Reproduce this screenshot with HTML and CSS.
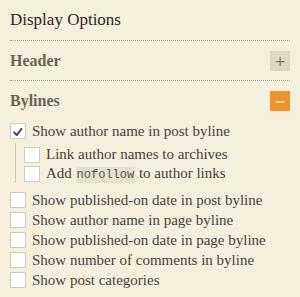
FILE: index.html
```html
<!DOCTYPE html>
<html>
<head>
<meta charset="utf-8">
<link rel="stylesheet" href="styles.css">
</head>
<body>
<div class="panel">
  <div class="title">Display Options</div>
  <div class="section">
    <span class="section-name">Header</span>
    <span class="toggle">+</span>
  </div>
  <div class="section open">
    <span class="section-name">Bylines</span>
    <span class="toggle active">&minus;</span>
  </div>
  <ul class="options">
    <li class="opt"><span class="cb checked"><svg viewBox="0 0 16 16" width="16" height="16"><path d="M3.5 8.5 L6.5 11.5 L12 4.5" fill="none" stroke="#4b3b6b" stroke-width="2.2" stroke-linecap="round" stroke-linejoin="round"/></svg></span><span>Show author name in post byline</span></li>
    <li class="sub">
      <ul class="suboptions">
        <li class="opt subopt"><span class="cb"></span><span>Link author names to archives</span></li>
        <li class="opt subopt"><span class="cb"></span><span>Add <code>nofollow</code> to author links</span></li>
      </ul>
    </li>
    <li class="opt"><span class="cb"></span><span>Show published-on date in post byline</span></li>
    <li class="opt"><span class="cb"></span><span>Show author name in page byline</span></li>
    <li class="opt"><span class="cb"></span><span>Show published-on date in page byline</span></li>
    <li class="opt"><span class="cb"></span><span>Show number of comments in byline</span></li>
    <li class="opt"><span class="cb"></span><span>Show post categories</span></li>
  </ul>
</div>
</body>
</html>
```

FILE: styles.css
```css
html, body {
  margin: 0;
  padding: 0;
  background: #f5f0de;
}
body {
  font-family: "Liberation Serif", "Times New Roman", serif;
  color: #4d4a44;
}
.panel {
  padding: 0 10px;
}
.title {
  height: 40px;
  line-height: 40px;
  font-size: 17px;
  color: #2a2826;
  border-bottom: 1px dotted #aba38c;
}
.section {
  height: 39px;
  display: flex;
  align-items: center;
  justify-content: space-between;
  border-bottom: 1px dotted #aba38c;
}
.section.open {
  border-bottom: none;
}
.section-name {
  font-size: 16px;
  font-weight: bold;
  color: #6a6454;
}
.toggle {
  width: 20px;
  height: 20px;
  background: #dcd8c3;
  color: #7b7668;
  font-family: "DejaVu Sans", sans-serif;
  font-size: 14px;
  line-height: 20px;
  text-align: center;
}
.toggle.active {
  background: #ec9230;
  color: #fbe6c6;
  font-weight: bold;
}
.options, .suboptions {
  list-style: none;
  margin: 0;
  padding: 0;
}
.options {
  padding-top: 1px;
}
.opt {
  display: flex;
  align-items: center;
  height: 20px;
  font-size: 15px;
  color: #45423d;
  white-space: nowrap;
}
.cb {
  flex: none;
  box-sizing: border-box;
  width: 16px;
  height: 16px;
  border: 1px solid #cfcbc2;
  background: #ffffff;
  margin-right: 6px;
  display: flex;
}
.sub {
  margin: 2px 0 7px 5px;
  border-left: 1px solid #cfc9b8;
  padding: 2px 0 0 8px;
}
.subopt {
  height: 19px;
}
code {
  font-family: "Liberation Mono", monospace;
  font-size: 12px;
  background: #e6e1cf;
  color: #555;
  padding: 1px 1px;
}
```
